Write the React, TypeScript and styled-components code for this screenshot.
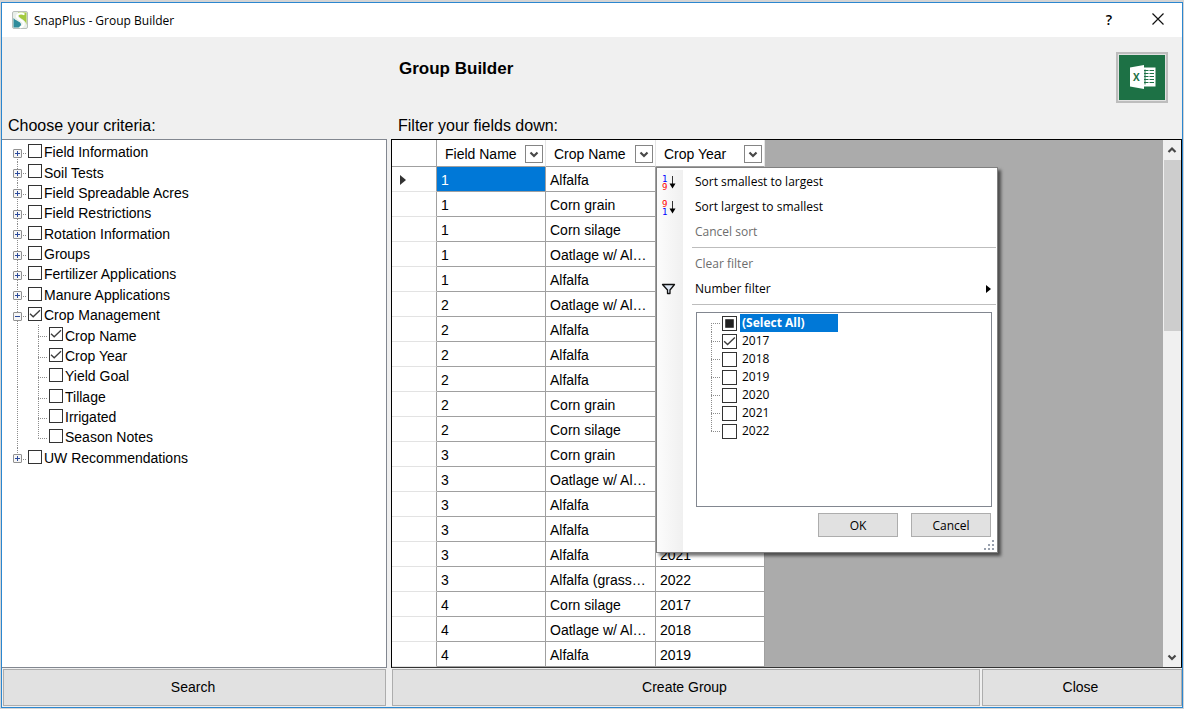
import React from "react";
import styled, { createGlobalStyle, css } from "styled-components";

const sans = `"Liberation Sans", Arial, sans-serif`;
const ui = `"Open Sans", "Noto Sans", sans-serif`;

const GlobalStyle = createGlobalStyle`
  *, *::before, *::after { box-sizing: border-box; }
  body { margin: 0; background: #d4d4d4; font-family: ${sans}; font-size: 14px; color: #000; }
  button, input { font: inherit; color: inherit; margin: 0; }
`;

const dotsDown = "repeating-linear-gradient(to bottom, #8c8c8c 0 1px, transparent 1px 2px)";
const dotsAcross = "repeating-linear-gradient(to right, #8c8c8c 0 1px, transparent 1px 2px)";

const Page = styled.div`
  display: flex;
  flex-direction: column;
  min-height: 100vh;
  padding: 2px 1px 1px;
`;

const Window = styled.div`
  flex: 1;
  display: flex;
  flex-direction: column;
  border: 1px solid #2b86cf;
  background: #f0f0f0;
`;

const TitleBar = styled.header`
  display: flex;
  align-items: center;
  height: 34px;
  padding: 0 7px 0 10px;
  background: #fff;
  font-family: ${ui};
  font-size: 12px;
`;

const TitleText = styled.span`
  flex: 1;
  padding-left: 6px;
`;

const TitleButton = styled.button`
  display: grid;
  place-items: center;
  width: 34px;
  height: 30px;
  margin-left: 15px;
  padding: 0 0 2px;
  border: 0;
  background: none;
  font-size: 14px;
  font-weight: 600;
`;

const Body = styled.main`
  flex: 1;
  display: grid;
  grid-template-columns: 385fr 791fr;
  column-gap: 4px;
`;

const Column = styled.section`
  display: flex;
  flex-direction: column;
  min-width: 0;
`;

const ColumnHeader = styled.div`
  display: flex;
  flex-direction: column;
  justify-content: space-between;
  height: 102px;
  padding: 15px 14px 4px 7px;
`;

const CriteriaHeader = styled(ColumnHeader)`
  padding-left: 6px;
`;

const TitleRow = styled.div`
  display: flex;
  justify-content: space-between;
`;

const Heading = styled.h1`
  margin: 6px 0 0 1px;
  font-size: 17px;
  line-height: 22px;
  font-weight: bold;
`;

const Caption = styled.h2`
  margin: auto 0 0;
  font-size: 16px;
  line-height: 18px;
  font-weight: normal;
`;

const ExcelButton = styled.button`
  width: 52px;
  height: 51px;
  padding: 1px;
  border: 2px solid #bdbdbd;
  background: #e1e1e1;
  svg { display: block; width: 100%; height: 100%; }
`;

const TreePanel = styled.div`
  flex: 1;
  padding: 2px 0 0;
  border: 1px solid #828790;
  border-left: 0;
  background: #fff;
`;

const Tree = styled.ul`
  display: grid;
  grid-auto-rows: 1fr;
  height: 326px;
  margin: 0;
  padding: 0;
  list-style: none;
`;

const TreeRow = styled.li`
  display: flex;
  align-items: stretch;
`;

const Trunk = styled.span<{ $branch: boolean; $start: boolean; $end: boolean }>`
  display: grid;
  align-items: center;
  justify-items: start;
  width: 26px;
  padding: 2px 0 0 11px;
  background:
    ${dotsDown} 15px ${(p) => (p.$start ? "11px" : "0")} / 1px ${(p) => (p.$end ? "50%" : "100%")} no-repeat
    ${(p) => p.$branch && css`, ${dotsAcross} 15px 11px / 10px 1px no-repeat`};
`;

const Limb = styled.span<{ $end: boolean }>`
  width: 21px;
  background:
    ${dotsDown} 10px 0 / 1px ${(p) => (p.$end ? "50%" : "100%")} no-repeat,
    ${dotsAcross} 10px 11px / 10px 1px no-repeat;
`;

const Expander = styled.button`
  display: block;
  width: 9px;
  height: 9px;
  padding: 0;
  border: 1px solid #919191;
  border-radius: 1px;
  background: #f6f6f6;
  svg { display: block; }
`;

const TreeLabel = styled.label`
  display: flex;
  align-items: center;
  gap: 2px;
  line-height: 18px;
  white-space: nowrap;
`;

const Tick = styled.span<{ $size: number }>`
  display: grid;
  width: ${(p) => p.$size}px;
  height: ${(p) => p.$size}px;
  input {
    grid-area: 1 / 1;
    appearance: none;
    width: 100%;
    height: 100%;
    border: 1px solid #333;
    background: #fff;
  }
  svg { grid-area: 1 / 1; pointer-events: none; width: 100%; height: 100%; }
`;

const RaisedTick = styled.span`
  align-self: flex-start;
  padding-top: 2px;
`;

const Footer = styled.div`
  display: flex;
  gap: 2px;
  height: 39px;
  padding: 1px 0 1px 1px;
`;

const PushButton = styled.button<{ $wide?: boolean }>`
  flex: ${(p) => (p.$wide ? "1" : "0 0 200px")};
  padding: 0 3px 1px 0;
  border: 1px solid #adadad;
  background: #e1e1e1;
`;

const SearchFooter = styled(Footer)`
  padding-right: 1px;
`;

const GridPanel = styled.div`
  flex: 1;
  display: flex;
  justify-content: space-between;
  border: 1px solid #000;
  border-bottom-color: #333;
  background: #ababab;
`;

const DataTable = styled.table`
  table-layout: fixed;
  align-self: flex-start;
  width: 373px;
  border-spacing: 0;
`;

const HeadCell = styled.th<{ $dark?: boolean }>`
  position: relative;
  height: 27px;
  padding: 0;
  border-right: 1px solid ${(p) => (p.$dark ? "#a0a0a0" : "#e5e5e5")};
  border-bottom: 1px solid #a0a0a0;
  background: #fff;
  font-weight: normal;
  text-align: left;
`;

const HeadContent = styled.div`
  display: flex;
  align-items: center;
  justify-content: space-between;
  padding: 1px 2px 0 8px;
`;

const FilterButton = styled.button`
  display: grid;
  place-items: center;
  width: 18px;
  height: 18px;
  padding: 0;
  border: 1px solid #858585;
  background: #fff;
`;

const RowHead = styled.th`
  height: 25px;
  padding: 1px 0 0 8px;
  border-right: 1px solid #a0a0a0;
  border-bottom: 1px solid #e3e3e3;
  background: #fff;
  svg { display: block; }
`;

const Cell = styled.td<{ $selected?: boolean }>`
  height: 25px;
  padding: 2px 3px 0 4px;
  border-right: 1px solid #a0a0a0;
  border-bottom: 1px solid #a0a0a0;
  background: ${(p) => (p.$selected ? "#0078d7" : "#fff")};
  color: ${(p) => (p.$selected ? "#fff" : "#000")};
  line-height: 20px;
  white-space: nowrap;
`;

const ScrollBar = styled.div`
  display: flex;
  flex-direction: column;
  width: 18px;
  background: #f0f0f0;
`;

const ScrollArrow = styled.button`
  display: grid;
  place-items: center;
  height: 20px;
  padding: 0;
  border: 0;
  background: none;
`;

const ScrollTrack = styled.div`
  flex: 1;
  padding: 0 0 0 1px;
`;

const ScrollThumb = styled.div`
  height: 171px;
  background: #cdcdcd;
`;

const Menu = styled.div`
  position: absolute;
  z-index: 2;
  top: 100%;
  left: 0;
  width: 342px;
  height: 386px;
  margin-top: 1px;
  padding: 1px 1px 0 0;
  border: 1px solid #808080;
  background: linear-gradient(to right, #fcfcfc, #f0f0f0) 0 2px / 26px 100% no-repeat, #fff;
  box-shadow: 3px 3px 3px rgba(0, 0, 0, 0.55);
  font-family: ${ui};
  font-size: 12px;
`;

const MenuItem = styled.button`
  display: grid;
  grid-template-columns: 34px 1fr 12px;
  align-items: center;
  width: 100%;
  height: 25px;
  padding: 0 2px 0 4px;
  border: 0;
  background: none;
  text-align: left;
  &:disabled { color: #6d6d6d; }
  svg { display: block; }
`;

const MenuRule = styled.hr`
  height: 1px;
  margin: 3px 0 3px 35px;
  border: 0;
  background: #bdbdbd;
`;

const ValueList = styled.ul`
  height: 195px;
  margin: 7px 4px 6px 39px;
  padding: 1px 0 0 14px;
  border: 1px solid #828790;
  background: #fff;
  list-style: none;
`;

const ValueRow = styled.li<{ $place: "first" | "middle" | "last" }>`
  height: 18px;
  padding-left: 11px;
  background:
    ${dotsDown} 0 ${(p) => (p.$place === "first" ? "9px" : "0")} / 1px ${(p) => (p.$place === "last" ? "9px" : "100%")} no-repeat,
    ${dotsAcross} 0 9px / 10px 1px no-repeat;
`;

const ValueLabel = styled.label`
  display: flex;
  align-items: center;
  gap: 3px;
  height: 18px;
`;

const ValueText = styled.span<{ $selected: boolean }>`
  padding: 0 2px;
  line-height: 18px;
  ${(p) =>
    p.$selected &&
    css`
      width: 98px;
      background: #0078d7;
      color: #fff;
      font-weight: bold;
    `}
`;

const MenuActions = styled.div`
  display: flex;
  justify-content: flex-end;
  gap: 13px;
  padding-right: 5px;
`;

const MenuButton = styled.button`
  width: 80px;
  height: 24px;
  padding: 0;
  border: 1px solid #adadad;
  background: #e1e1e1;
`;

const Grip = styled.div`
  display: flex;
  justify-content: flex-end;
  padding: 3px 1px 0 0;
  svg { display: block; }
`;

type TickState = "on" | "off" | "mixed";

function CheckBox({ state, size }: { state: TickState; size: number }) {
  return (
    <Tick $size={size}>
      <input type="checkbox" defaultChecked={state === "on"} />
      <svg viewBox="0 0 14 14" aria-hidden="true">
        {state === "on" && <path d="M2 6.7 5.2 9.8 12 3.2" fill="none" stroke="#3c3c3c" strokeWidth="1.3" />}
        {state === "mixed" && <rect x="3" y="3" width="8" height="8" fill="#222" />}
      </svg>
    </Tick>
  );
}

function Chevron({ up }: { up?: boolean }) {
  return (
    <svg width="10" height="8" viewBox="0 0 10 8" aria-hidden="true">
      <path d={up ? "M1.500 6 5 2.500 8.500 6" : "M1.500 2.500 5 6 8.500 2.500"} fill="none" stroke="#484848" strokeWidth="2.200" />
    </svg>
  );
}

function AppIcon() {
  return (
    <svg width="16" height="18" viewBox="0 0 16 18" aria-hidden="true">
      <rect x="0.5" y="0.5" width="15" height="17" rx="1.500" fill="#e9efe9" stroke="#b9bfbb" />
      <path d="M6 1.500h8.500V14c-.3-3-2-4.500-4.500-6C7.500 6.500 5.500 5 6 1.500z" fill="#a3c93f" />
      <path d="M1.500 7c1.500 2.500 7 3.500 7.500 6 .3 1.500-1 2.500-2.500 3.500h-5z" fill="#2f8c9b" />
      <path d="M12.500 3.500C9 1.500 5 2.800 5 5.500c0 3.200 6.800 3.500 6.800 7.200 0 2-1.800 3.200-3.800 3.800" fill="none" stroke="#fff" strokeWidth="1.900" />
    </svg>
  );
}

function ExcelIcon() {
  return (
    <svg viewBox="0 0 46 45" aria-hidden="true">
      <rect width="46" height="45" fill="#1d7145" />
      <path d="M24.500 12.500h12v19h-12z" fill="#fff" />
      <path d="M25 15.500h10M25 18.500h10M25 21.500h10M25 24.500h10M25 27.500h10" stroke="#1d7145" strokeWidth="1" />
      <path d="M30 14v16M35.500 14v15" stroke="#fff" strokeWidth="1" />
      <path d="M26 14.500v15" stroke="#1d7145" strokeWidth="1" />
      <path d="M11 12.500 25 10v24L11 31.500z" fill="#fff" />
      <text x="14" y="26" fontSize="10" fontWeight="bold" fontFamily="Open Sans" fill="#1d7145">X</text>
    </svg>
  );
}

function SortIcon({ descending }: { descending?: boolean }) {
  return (
    <svg width="16" height="18" viewBox="0 0 16 18" fontFamily="DejaVu Sans Mono" fontSize="9" aria-hidden="true">
      <text x="1" y="9" fill={descending ? "#f00" : "#00f"}>{descending ? "9" : "1"}</text>
      <text x="1" y="17" fill={descending ? "#00f" : "#f00"}>{descending ? "1" : "9"}</text>
      <path d="M11.500 3v9" stroke="#333" strokeWidth="1" />
      <path d="M8.500 10.500h6l-3 5z" fill="#000" />
    </svg>
  );
}

function FunnelIcon() {
  return (
    <svg width="16" height="14" viewBox="0 0 16 14" aria-hidden="true">
      <path d="M1.500 2.500h12L9 8v3.500H6.500V8z" fill="#dfe8f5" stroke="#111" strokeWidth="1.300" strokeLinejoin="round" />
    </svg>
  );
}

const criteria: { label: string; child?: boolean; open?: boolean; checked?: boolean; last?: boolean }[] = [
  { label: "Field Information" },
  { label: "Soil Tests" },
  { label: "Field Spreadable Acres" },
  { label: "Field Restrictions" },
  { label: "Rotation Information" },
  { label: "Groups" },
  { label: "Fertilizer Applications" },
  { label: "Manure Applications" },
  { label: "Crop Management", open: true, checked: true },
  { label: "Crop Name", child: true, checked: true },
  { label: "Crop Year", child: true, checked: true },
  { label: "Yield Goal", child: true },
  { label: "Tillage", child: true },
  { label: "Irrigated", child: true },
  { label: "Season Notes", child: true, last: true },
  { label: "UW Recommendations", last: true },
];

const rows: [string, string, string][] = [
  ["1", "Alfalfa", "2018"],
  ["1", "Corn grain", "2019"],
  ["1", "Corn silage", "2020"],
  ["1", "Oatlage w/ Al…", "2021"],
  ["1", "Alfalfa", "2022"],
  ["2", "Oatlage w/ Al…", "2017"],
  ["2", "Alfalfa", "2018"],
  ["2", "Alfalfa", "2019"],
  ["2", "Alfalfa", "2020"],
  ["2", "Corn grain", "2021"],
  ["2", "Corn silage", "2022"],
  ["3", "Corn grain", "2017"],
  ["3", "Oatlage w/ Al…", "2018"],
  ["3", "Alfalfa", "2019"],
  ["3", "Alfalfa", "2020"],
  ["3", "Alfalfa", "2021"],
  ["3", "Alfalfa (grass…", "2022"],
  ["4", "Corn silage", "2017"],
  ["4", "Oatlage w/ Al…", "2018"],
  ["4", "Alfalfa", "2019"],
];

const values: { label: string; state: TickState }[] = [
  { label: "(Select All)", state: "mixed" },
  { label: "2017", state: "on" },
  { label: "2018", state: "off" },
  { label: "2019", state: "off" },
  { label: "2020", state: "off" },
  { label: "2021", state: "off" },
  { label: "2022", state: "off" },
];

function CriteriaTree() {
  return (
    <Tree>
      {criteria.map((c, i) => (
        <TreeRow key={c.label}>
          <Trunk $branch={!c.child} $start={i === 0} $end={!c.child && !!c.last}>
            {!c.child && (
              <Expander aria-label={(c.open ? "Collapse " : "Expand ") + c.label}>
                <svg width="7" height="7" viewBox="0 0 7 7" aria-hidden="true">
                  <path d={c.open ? "M1 3.500h5" : "M1 3.500h5M3.500 1v5"} stroke="#2b4a9b" />
                </svg>
              </Expander>
            )}
          </Trunk>
          {c.child && <Limb $end={!!c.last} />}
          <TreeLabel>
            <RaisedTick>
              <CheckBox state={c.checked ? "on" : "off"} size={14} />
            </RaisedTick>
            {c.label}
          </TreeLabel>
        </TreeRow>
      ))}
    </Tree>
  );
}

function FilterMenu() {
  return (
    <Menu>
      <MenuItem><SortIcon /><span>Sort smallest to largest</span></MenuItem>
      <MenuItem><SortIcon descending /><span>Sort largest to smallest</span></MenuItem>
      <MenuItem disabled><span /><span>Cancel sort</span></MenuItem>
      <MenuRule />
      <MenuItem disabled><span /><span>Clear filter</span></MenuItem>
      <MenuItem>
        <FunnelIcon />
        <span>Number filter</span>
        <svg width="12" height="8" viewBox="0 0 12 8" aria-hidden="true"><path d="M4 0v8l5-4z" /></svg>
      </MenuItem>
      <MenuRule />
      <ValueList>
        {values.map((v, i) => (
          <ValueRow key={v.label} $place={i === 0 ? "first" : i === values.length - 1 ? "last" : "middle"}>
            <ValueLabel>
              <CheckBox state={v.state} size={15} />
              <ValueText $selected={i === 0}>{v.label}</ValueText>
            </ValueLabel>
          </ValueRow>
        ))}
      </ValueList>
      <MenuActions>
        <MenuButton>OK</MenuButton>
        <MenuButton>Cancel</MenuButton>
      </MenuActions>
      <Grip>
        <svg width="12" height="12" viewBox="0 0 12 12" fill="#98a0ad" aria-hidden="true">
          <path d="M9 0h2v2H9zM5 4h2v2H5zM9 4h2v2H9zM1 8h2v2H1zM5 8h2v2H5zM9 8h2v2H9z" />
        </svg>
      </Grip>
    </Menu>
  );
}

function FieldsTable() {
  return (
    <DataTable>
      <colgroup>
        <col style={{ width: 45 }} />
        <col style={{ width: 109 }} />
        <col style={{ width: 110 }} />
        <col style={{ width: 109 }} />
      </colgroup>
      <thead>
        <tr>
          <HeadCell $dark />
          {["Field Name", "Crop Name", "Crop Year"].map((name) => (
            <HeadCell key={name}>
              <HeadContent>
                {name}
                <FilterButton aria-label={"Filter " + name}><Chevron /></FilterButton>
              </HeadContent>
              {name === "Crop Year" && <FilterMenu />}
            </HeadCell>
          ))}
        </tr>
      </thead>
      <tbody>
        {rows.map(([field, crop, year], i) => (
          <tr key={i}>
            <RowHead>
              {i === 0 && (
                <svg width="6" height="10" viewBox="0 0 6 10" aria-hidden="true"><path d="M0 0v10l6-5z" fill="#333" /></svg>
              )}
            </RowHead>
            <Cell $selected={i === 0}>{field}</Cell>
            <Cell>{crop}</Cell>
            <Cell>{year}</Cell>
          </tr>
        ))}
      </tbody>
    </DataTable>
  );
}

export default function App() {
  return (
    <Page>
      <GlobalStyle />
      <Window>
        <TitleBar>
          <AppIcon />
          <TitleText>SnapPlus - Group Builder</TitleText>
          <TitleButton aria-label="Help">?</TitleButton>
          <TitleButton aria-label="Close window">
            <svg width="12" height="12" viewBox="0 0 12 12" aria-hidden="true">
              <path d="M0.500 0.500l11 11M11.500 0.500l-11 11" stroke="#111" strokeWidth="1.200" />
            </svg>
          </TitleButton>
        </TitleBar>
        <Body>
          <Column>
            <CriteriaHeader>
              <Caption>Choose your criteria:</Caption>
            </CriteriaHeader>
            <TreePanel>
              <CriteriaTree />
            </TreePanel>
            <SearchFooter>
              <PushButton $wide>Search</PushButton>
            </SearchFooter>
          </Column>
          <Column>
            <ColumnHeader>
              <TitleRow>
                <Heading>Group Builder</Heading>
                <ExcelButton aria-label="Export to Excel"><ExcelIcon /></ExcelButton>
              </TitleRow>
              <Caption>Filter your fields down:</Caption>
            </ColumnHeader>
            <GridPanel>
              <FieldsTable />
              <ScrollBar>
                <ScrollArrow aria-label="Scroll up"><Chevron up /></ScrollArrow>
                <ScrollTrack><ScrollThumb /></ScrollTrack>
                <ScrollArrow aria-label="Scroll down"><Chevron /></ScrollArrow>
              </ScrollBar>
            </GridPanel>
            <Footer>
              <PushButton $wide>Create Group</PushButton>
              <PushButton>Close</PushButton>
            </Footer>
          </Column>
        </Body>
      </Window>
    </Page>
  );
}
